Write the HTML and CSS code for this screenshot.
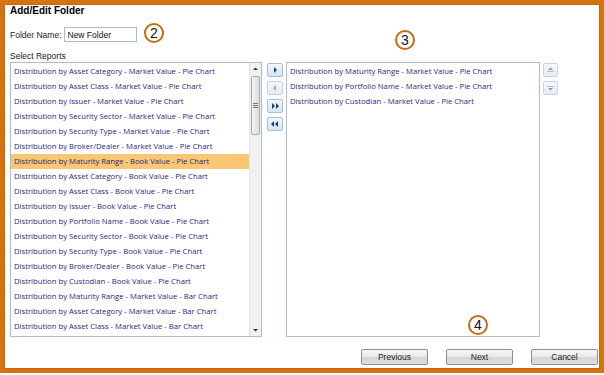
FILE: index.html
```html
<!DOCTYPE html>
<html lang="en">
<head>
    <meta charset="UTF-8">
    <meta name="viewport" content="width=device-width, initial-scale=1.0">
    <title>Add/Edit Folder</title>
    <link rel="stylesheet" href="styles.css">
</head>
<body>
    <div class="dialog">
        <h1 class="dialog__title">Add/Edit Folder</h1>

        <div class="dialog__name-row">
            <label class="dialog__label" for="folder-name">Folder Name:</label>
            <input class="dialog__input" type="text" id="folder-name" value="New Folder"/>
        </div>

        <div class="dialog__section-label">Select Reports</div>

        <div class="picker">
            <div class="picker__list picker__list--source">
                <ul class="picker__items">
                    <li class="picker__item">Distribution by Asset Category - Market Value - Pie Chart</li>
                    <li class="picker__item">Distribution by Asset Class - Market Value - Pie Chart</li>
                    <li class="picker__item">Distribution by Issuer - Market Value - Pie Chart</li>
                    <li class="picker__item">Distribution by Security Sector - Market Value - Pie Chart</li>
                    <li class="picker__item">Distribution by Security Type - Market Value - Pie Chart</li>
                    <li class="picker__item">Distribution by Broker/Dealer - Market Value - Pie Chart</li>
                    <li class="picker__item picker__item--selected">Distribution by Maturity Range - Book Value - Pie Chart</li>
                    <li class="picker__item">Distribution by Asset Category - Book Value - Pie Chart</li>
                    <li class="picker__item">Distribution by Asset Class - Book Value - Pie Chart</li>
                    <li class="picker__item">Distribution by Issuer - Book Value - Pie Chart</li>
                    <li class="picker__item">Distribution by Portfolio Name - Book Value - Pie Chart</li>
                    <li class="picker__item">Distribution by Security Sector - Book Value - Pie Chart</li>
                    <li class="picker__item">Distribution by Security Type - Book Value - Pie Chart</li>
                    <li class="picker__item">Distribution by Broker/Dealer - Book Value - Pie Chart</li>
                    <li class="picker__item">Distribution by Custodian - Book Value - Pie Chart</li>
                    <li class="picker__item">Distribution by Maturity Range - Market Value - Bar Chart</li>
                    <li class="picker__item">Distribution by Asset Category - Market Value - Bar Chart</li>
                    <li class="picker__item">Distribution by Asset Class - Market Value - Bar Chart</li>
                </ul>
                <div class="scrollbar">
                    <div class="scrollbar__arrow">
                        <svg width="11" height="12" viewBox="0 0 11 12"><polygon points="3,7 5.5,4.5 8,7" fill="#333"/></svg>
                    </div>
                    <div class="scrollbar__track">
                        <div class="scrollbar__thumb"><span class="scrollbar__grip"></span></div>
                    </div>
                    <div class="scrollbar__arrow">
                        <svg width="11" height="12" viewBox="0 0 11 12"><polygon points="3,5 8,5 5.5,7.5" fill="#333"/></svg>
                    </div>
                </div>
            </div>

            <div class="picker__movers">
                <button class="picker__btn">
                    <svg width="14" height="12" viewBox="0 0 14 12"><polygon points="6,3 9,6 6,9" fill="#1f3f72"/></svg>
                </button>
                <button class="picker__btn picker__btn--disabled">
                    <svg width="14" height="12" viewBox="0 0 14 12"><polygon points="8,3 5,6 8,9" fill="#a2aebf"/></svg>
                </button>
                <button class="picker__btn">
                    <svg width="14" height="12" viewBox="0 0 14 12"><polygon points="4,3 7,6 4,9" fill="#1f3f72"/><polygon points="8,3 11,6 8,9" fill="#1f3f72"/></svg>
                </button>
                <button class="picker__btn">
                    <svg width="14" height="12" viewBox="0 0 14 12"><polygon points="6,3 3,6 6,9" fill="#1f3f72"/><polygon points="10,3 7,6 10,9" fill="#1f3f72"/></svg>
                </button>
            </div>

            <div class="picker__list picker__list--target">
                <ul class="picker__items">
                    <li class="picker__item">Distribution by Maturity Range - Market Value - Pie Chart</li>
                    <li class="picker__item">Distribution by Portfolio Name - Market Value - Pie Chart</li>
                    <li class="picker__item">Distribution by Custodian - Market Value - Pie Chart</li>
                </ul>
            </div>

            <div class="picker__order">
                <button class="picker__btn picker__btn--disabled">
                    <svg width="13" height="12" viewBox="0 0 13 12"><polygon points="4,6 6.5,3.5 9,6" fill="#8e98a4"/><rect x="3" y="7" width="7" height="1" fill="#b3bcc7"/></svg>
                </button>
                <button class="picker__btn picker__btn--disabled">
                    <svg width="13" height="12" viewBox="0 0 13 12"><rect x="3" y="4" width="7" height="1" fill="#b3bcc7"/><polygon points="4,6 9,6 6.5,8.5" fill="#8e98a4"/></svg>
                </button>
            </div>
        </div>

        <div class="dialog__actions">
            <button class="dialog__button">Previous</button>
            <button class="dialog__button">Next</button>
            <button class="dialog__button">Cancel</button>
        </div>

        <span class="callout callout--two"><span class="callout__ring">2</span></span>
        <span class="callout callout--three"><span class="callout__ring">3</span></span>
        <span class="callout callout--four"><span class="callout__ring">4</span></span>
    </div>
</body>
</html>
```

FILE: styles.css
```css
body {
    margin: 0;
    background: #fff;
}
.dialog {
    position: relative;
    width: 604px;
    height: 373px;
    box-sizing: border-box;
    border: 4px solid #d5730f;
    box-shadow: inset 0 0 0 1px #c7680c;
    padding: 1px 2px 0 6px;
    background: #fff;
    font-family: "Liberation Sans", Arial, sans-serif;
    color: #1a1a1a;
}
.dialog__title {
    margin: 0;
    font-size: 10px;
    line-height: 12px;
    font-weight: bold;
    color: #000;
}
.dialog__name-row {
    display: flex;
    align-items: center;
    height: 15px;
    margin-top: 10px;
}
.dialog__label {
    font-size: 8.5px;
}
.dialog__input {
    box-sizing: border-box;
    width: 73px;
    height: 15px;
    margin: 0 0 0 2px;
    padding: 0 3px;
    border: 1px solid #a4bcd6;
    font-family: inherit;
    font-size: 8.5px;
    color: #111;
    outline: none;
}
.dialog__section-label {
    margin-top: 9px;
    font-size: 8.5px;
    line-height: 11px;
}

.picker {
    display: flex;
    height: 275px;
}
.picker__list {
    box-sizing: border-box;
    height: 275px;
    border: 1px solid #aabdd4;
    display: flex;
    background: #fff;
}
.picker__list--source {
    width: 252px;
}
.picker__list--target {
    width: 254px;
    margin-left: 3px;
}
.picker__items {
    flex: 1;
    list-style: none;
    margin: 0;
    padding: 1px 0 0 0;
    overflow: hidden;
}
.picker__item {
    height: 15px;
    line-height: 15px;
    padding-left: 3px;
    white-space: nowrap;
    font-family: "Open Sans", "Noto Sans", sans-serif;
    font-size: 7.7px;
    color: #1f1f78;
}
.picker__item--selected {
    background: #fbc774;
    margin-left: -1px;
    padding-left: 4px;
}
.picker__movers {
    display: flex;
    flex-direction: column;
    gap: 4px;
    width: 16px;
    margin-left: 5px;
    padding-top: 1px;
}
.picker__order {
    display: flex;
    flex-direction: column;
    gap: 4px;
    width: 15px;
    margin-left: 3px;
    padding-top: 1px;
}
.picker__btn {
    box-sizing: border-box;
    width: 100%;
    height: 14px;
    padding: 0;
    border: 1px solid #a6bedb;
    border-radius: 2px;
    background: linear-gradient(#f1f6fc, #d7e4f4);
    display: flex;
    align-items: center;
    justify-content: center;
}
.picker__btn--disabled {
    border-color: #c3d3e6;
    background: linear-gradient(#f5f8fc, #e4ecf6);
}

.scrollbar {
    width: 11px;
    display: flex;
    flex-direction: column;
    background: #f1f1f1;
    border-left: 1px solid #e4e4e4;
}
.scrollbar__arrow {
    height: 12px;
    display: flex;
    align-items: center;
    justify-content: center;
}
.scrollbar__track {
    flex: 1;
}
.scrollbar__thumb {
    box-sizing: border-box;
    height: 59px;
    margin: 1px 1px 0 1px;
    border: 1px solid #a9a9a9;
    border-radius: 2px;
    background: linear-gradient(90deg, #f3f3f3, #dcdcdc);
    display: flex;
    align-items: center;
    justify-content: center;
}
.scrollbar__grip {
    width: 5px;
    height: 5px;
    background: linear-gradient(#777 1px, transparent 1px) 0 0 / 5px 2px;
}

.dialog__actions {
    display: flex;
    justify-content: flex-end;
    gap: 18px;
    margin-top: 12px;
}
.dialog__button {
    box-sizing: border-box;
    width: 67px;
    height: 16px;
    padding: 0;
    border: 1px solid #8f8f8f;
    border-radius: 2px;
    background: linear-gradient(#f6f6f6 0%, #e9e9e9 50%, #d6d6d6 51%, #dcdcdc 100%);
    font-family: "Liberation Sans", Arial, sans-serif;
    font-size: 8.5px;
    color: #222;
}

.callout {
    position: absolute;
    background: #fff;
    padding: 1px;
}
.callout__ring {
    display: block;
    box-sizing: border-box;
    width: 20px;
    height: 20px;
    border: 2px solid #c46b12;
    border-radius: 50%;
    text-align: center;
    font-family: "Liberation Sans", Arial, sans-serif;
    font-size: 14px;
    line-height: 16px;
    color: #111;
}
.callout--two {
    left: 139px;
    top: 18px;
}
.callout--three {
    left: 390px;
    top: 25px;
}
.callout--four {
    left: 463px;
    top: 310px;
}
```
